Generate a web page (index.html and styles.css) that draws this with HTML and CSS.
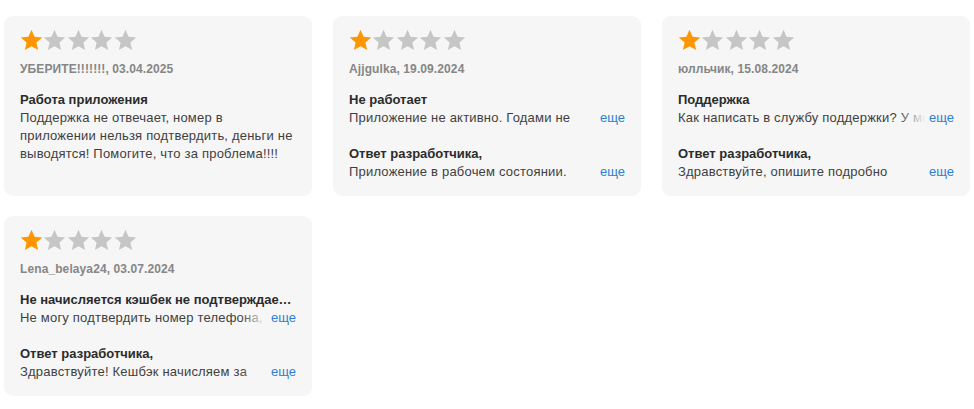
FILE: index.html
```html
<!DOCTYPE html>
<html lang="ru">
<head>
<meta charset="utf-8">
<link rel="stylesheet" href="styles.css">
</head>
<body>
<svg width="0" height="0" class="defs" aria-hidden="true">
  <defs>
    <polygon id="star" points="12,0.8 15.2,8.2 23.2,8.9 17.1,14.2 18.9,22 12,17.9 5.1,22 6.9,14.2 0.8,8.9 8.8,8.2"/>
  </defs>
</svg>
<main class="grid">
  <article class="card">
    <div class="stars">
      <svg class="star on" viewBox="0 0 24 24"><use href="#star"/></svg>
      <svg class="star" viewBox="0 0 24 24"><use href="#star"/></svg>
      <svg class="star" viewBox="0 0 24 24"><use href="#star"/></svg>
      <svg class="star" viewBox="0 0 24 24"><use href="#star"/></svg>
      <svg class="star" viewBox="0 0 24 24"><use href="#star"/></svg>
    </div>
    <div class="meta">УБЕРИТЕ!!!!!!!, 03.04.2025</div>
    <div class="block">
      <div class="title">Работа приложения</div>
      <p class="text">Поддержка не отвечает, номер в приложении нельзя подтвердить, деньги не выводятся! Помогите, что за проблема!!!!</p>
    </div>
  </article>

  <article class="card">
    <div class="stars">
      <svg class="star on" viewBox="0 0 24 24"><use href="#star"/></svg>
      <svg class="star" viewBox="0 0 24 24"><use href="#star"/></svg>
      <svg class="star" viewBox="0 0 24 24"><use href="#star"/></svg>
      <svg class="star" viewBox="0 0 24 24"><use href="#star"/></svg>
      <svg class="star" viewBox="0 0 24 24"><use href="#star"/></svg>
    </div>
    <div class="meta">Ajjgulka, 19.09.2024</div>
    <div class="block">
      <div class="title">Не работает</div>
      <p class="text clamp">Приложение не активно. Годами не обновляется, ничего не работает<span class="more">еще</span></p>
    </div>
    <div class="block reply">
      <div class="title">Ответ разработчика,</div>
      <p class="text clamp">Приложение в рабочем состоянии. Пожалуйста, напишите нам<span class="more">еще</span></p>
    </div>
  </article>

  <article class="card">
    <div class="stars">
      <svg class="star on" viewBox="0 0 24 24"><use href="#star"/></svg>
      <svg class="star" viewBox="0 0 24 24"><use href="#star"/></svg>
      <svg class="star" viewBox="0 0 24 24"><use href="#star"/></svg>
      <svg class="star" viewBox="0 0 24 24"><use href="#star"/></svg>
      <svg class="star" viewBox="0 0 24 24"><use href="#star"/></svg>
    </div>
    <div class="meta">юлльчик, 15.08.2024</div>
    <div class="block">
      <div class="title">Поддержка</div>
      <p class="text clamp">Как написать в службу поддержки? У меня проблема с выводом<span class="more">еще</span></p>
    </div>
    <div class="block reply">
      <div class="title">Ответ разработчика,</div>
      <p class="text clamp">Здравствуйте, опишите подробно возникшую проблему в чате<span class="more">еще</span></p>
    </div>
  </article>

  <article class="card">
    <div class="stars">
      <svg class="star on" viewBox="0 0 24 24"><use href="#star"/></svg>
      <svg class="star" viewBox="0 0 24 24"><use href="#star"/></svg>
      <svg class="star" viewBox="0 0 24 24"><use href="#star"/></svg>
      <svg class="star" viewBox="0 0 24 24"><use href="#star"/></svg>
      <svg class="star" viewBox="0 0 24 24"><use href="#star"/></svg>
    </div>
    <div class="meta">Lena_belaya24, 03.07.2024</div>
    <div class="block">
      <div class="title ellipsis">Не начисляется кэшбек не подтверждается номер</div>
      <p class="text clamp">Не могу подтвердить номер телефона, не приходит код<span class="more">еще</span></p>
    </div>
    <div class="block reply">
      <div class="title">Ответ разработчика,</div>
      <p class="text clamp">Здравствуйте! Кешбэк начисляем за покупки в течение<span class="more">еще</span></p>
    </div>
  </article>
</main>
</body>
</html>
```

FILE: styles.css
```css
html, body {
  margin: 0;
  padding: 0;
  background: #ffffff;
}

body {
  font-family: "Liberation Sans", Arial, sans-serif;
  -webkit-font-smoothing: antialiased;
}

.defs {
  position: absolute;
  width: 0;
  height: 0;
  overflow: hidden;
}

.grid {
  display: grid;
  grid-template-columns: repeat(3, 308px);
  grid-auto-rows: 180px;
  column-gap: 21px;
  row-gap: 20px;
  padding: 16px 0 0 4px;
}

.card {
  background: #f6f6f6;
  border-radius: 9px;
  padding: 13px 16px 0 16px;
  box-sizing: border-box;
  overflow: hidden;
}

.stars {
  display: flex;
  gap: 0.4px;
  height: 23px;
}

.star {
  width: 23px;
  height: 23px;
  fill: #c6c6c6;
  display: block;
}

.star.on {
  fill: #ff9500;
}

.meta {
  margin-top: 8px;
  font-size: 12px;
  font-weight: 700;
  line-height: 18px;
  color: #868686;
  letter-spacing: 0.1px;
}

.block {
  margin-top: 13px;
}

.block.reply {
  margin-top: 18px;
}

.title {
  font-size: 13px;
  font-weight: 700;
  line-height: 18px;
  color: #2b2b2b;
}

.ellipsis {
  white-space: nowrap;
  overflow: hidden;
  text-overflow: ellipsis;
}

.text {
  margin: 0;
  font-size: 13px;
  line-height: 18px;
  color: #3f3f3f;
  letter-spacing: 0.2px;
}

.clamp {
  position: relative;
  height: 18px;
  overflow: hidden;
}

.more {
  position: absolute;
  right: 0;
  top: 0;
  padding-left: 30px;
  background: linear-gradient(to right, rgba(246, 246, 246, 0) 0, #f6f6f6 26px);
  color: #2c7fd3;
  letter-spacing: 0;
}
```
